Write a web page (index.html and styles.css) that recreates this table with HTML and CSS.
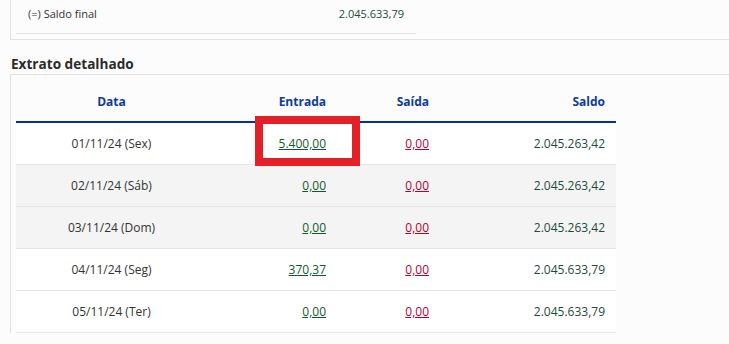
FILE: index.html
```html
<!DOCTYPE html>
<html lang="pt-BR">
<head>
  <meta charset="UTF-8">
  <title>Extrato detalhado</title>
  <link rel="stylesheet" href="styles.css">
</head>
<body>
  <div class="summary-card">
    <div class="summary-row">
      <span>(=) Saldo final</span>
      <span class="summary-value">2.045.633,79</span>
    </div>
  </div>

  <h2 class="section-title">Extrato detalhado</h2>

  <div class="card">
    <table class="statement">
      <colgroup>
        <col class="col-date">
        <col class="col-in">
        <col class="col-out">
        <col class="col-balance">
      </colgroup>
      <thead>
        <tr>
          <th class="center">Data</th>
          <th>Entrada</th>
          <th>Saída</th>
          <th>Saldo</th>
        </tr>
      </thead>
      <tbody>
        <tr>
          <td class="center">01/11/24 (Sex)</td>
          <td><a class="in" href="#">5.400,00</a></td>
          <td><a class="out" href="#">0,00</a></td>
          <td class="balance">2.045.263,42</td>
        </tr>
        <tr class="weekend">
          <td class="center">02/11/24 (Sáb)</td>
          <td><a class="in" href="#">0,00</a></td>
          <td><a class="out" href="#">0,00</a></td>
          <td class="balance">2.045.263,42</td>
        </tr>
        <tr class="weekend">
          <td class="center">03/11/24 (Dom)</td>
          <td><a class="in" href="#">0,00</a></td>
          <td><a class="out" href="#">0,00</a></td>
          <td class="balance">2.045.263,42</td>
        </tr>
        <tr>
          <td class="center">04/11/24 (Seg)</td>
          <td><a class="in" href="#">370,37</a></td>
          <td><a class="out" href="#">0,00</a></td>
          <td class="balance">2.045.633,79</td>
        </tr>
        <tr>
          <td class="center">05/11/24 (Ter)</td>
          <td><a class="in" href="#">0,00</a></td>
          <td><a class="out" href="#">0,00</a></td>
          <td class="balance">2.045.633,79</td>
        </tr>
      </tbody>
    </table>
  </div>

  <!-- highlight annotation -->
  <div class="highlight"></div>
</body>
</html>
```

FILE: styles.css
```css
body {
  margin: 0;
  background: #fcfcfc;
  font-family: 'Open Sans', 'Liberation Sans', sans-serif;
  color: #333;
}
.summary-card {
  margin-left: 10px;
  height: 39px;
  padding-left: 5px;
  border-left: 1px solid #e2e2e2;
  border-bottom: 1px solid #e2e2e2;
}
.summary-row {
  width: 376px;
  height: 27px;
  padding: 6px 12px 0;
  display: flex;
  justify-content: space-between;
  align-items: flex-start;
  border-bottom: 1px solid #e2e2e2;
  font-size: 11px;
  line-height: 15px;
}
.summary-value { color: #1d4a3c; }
.section-title {
  margin: 13px 0 0 11px;
  font-size: 13.6px;
  font-weight: bold;
  line-height: 21px;
  color: #2b2b2b;
}
.card {
  margin: 0 0 0 10px;
  border-top: 1px solid #e2e2e2;
  border-left: 1px solid #e2e2e2;
  padding-left: 5px;
  padding-top: 1px;
}
.statement {
  width: 600px;
  table-layout: fixed;
  border-collapse: collapse;
  font-size: 12px;
}
.col-date { width: 191px; }
.col-in { width: 130px; }
.col-out { width: 103px; }
.col-balance { width: 176px; }
.statement th {
  padding: 17px 11px 11px;
  line-height: 17px;
  text-align: right;
  color: #0d3a9c;
  font-weight: bold;
  border-bottom: 2px solid #0033a0;
}
.statement td {
  height: 41px;
  padding: 0 11px;
  text-align: right;
  border-bottom: 1px solid #e4e4e4;
  background: #fff;
}
.statement .center { text-align: center; }
.weekend td { background: #f4f4f4; }
.in { color: #0f5a2c; }
.out { color: #b8002f; }
.balance { color: #1d4a3c; }
.highlight {
  position: absolute;
  left: 255px;
  top: 116px;
  width: 89px;
  height: 34px;
  border: 8px solid #e41f26;
}
```
